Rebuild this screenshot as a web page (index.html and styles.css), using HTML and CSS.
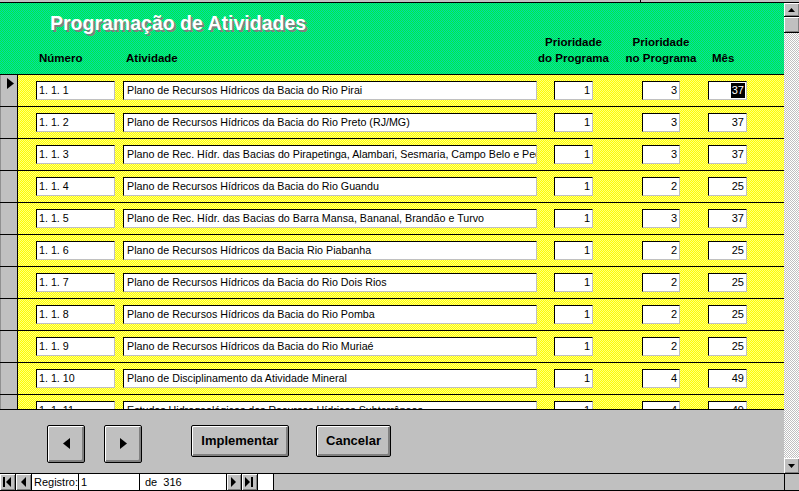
FILE: index.html
```html
<!DOCTYPE html>
<html lang="pt">
<head>
<meta charset="utf-8">
<title>Programação de Atividades</title>
<link rel="stylesheet" href="styles.css">
</head>
<body>
<div class="topbar"><div class="topbar-l"></div></div>
<div class="main">
  <div class="form">
    <div class="header">
      <div class="title">Programação de Atividades</div>
      <div class="cols labels">
        <div class="lbl l-num">Número</div>
        <div class="lbl l-atv">Atividade</div>
        <div class="lbl l-p1">Prioridade<br>do Programa</div>
        <div class="lbl l-p2">Prioridade<br>no Programa</div>
        <div class="lbl l-mes">Mês</div>
      </div>
    </div>
    <div class="detail">
      <div class="cols row">
        <div class="sel"><svg class="cur" width="7" height="11" viewBox="0 0 7 11"><polygon points="0,0 7,5.5 0,11" fill="#000"/></svg></div>
        <div class="fld c-num">1. 1. 1</div>
        <div class="fld c-atv">Plano de Recursos Hídricos da Bacia do Rio Pirai</div>
        <div class="fld r c-p1">1</div>
        <div class="fld r c-p2">3</div>
        <div class="fld r c-mes"><span class="hl">37</span></div>
      </div>
      <div class="cols row">
        <div class="sel"></div>
        <div class="fld c-num">1. 1. 2</div>
        <div class="fld c-atv">Plano de Recursos Hídricos da Bacia do Rio Preto (RJ/MG)</div>
        <div class="fld r c-p1">1</div>
        <div class="fld r c-p2">3</div>
        <div class="fld r c-mes">37</div>
      </div>
      <div class="cols row">
        <div class="sel"></div>
        <div class="fld c-num">1. 1. 3</div>
        <div class="fld c-atv">Plano de Rec. Hídr. das Bacias do Pirapetinga, Alambari, Sesmaria, Campo Belo e Pec</div>
        <div class="fld r c-p1">1</div>
        <div class="fld r c-p2">3</div>
        <div class="fld r c-mes">37</div>
      </div>
      <div class="cols row">
        <div class="sel"></div>
        <div class="fld c-num">1. 1. 4</div>
        <div class="fld c-atv">Plano de Recursos Hídricos da Bacia do Rio Guandu</div>
        <div class="fld r c-p1">1</div>
        <div class="fld r c-p2">2</div>
        <div class="fld r c-mes">25</div>
      </div>
      <div class="cols row">
        <div class="sel"></div>
        <div class="fld c-num">1. 1. 5</div>
        <div class="fld c-atv">Plano de Rec. Hídr. das Bacias do Barra Mansa, Bananal, Brandão e Turvo</div>
        <div class="fld r c-p1">1</div>
        <div class="fld r c-p2">3</div>
        <div class="fld r c-mes">37</div>
      </div>
      <div class="cols row">
        <div class="sel"></div>
        <div class="fld c-num">1. 1. 6</div>
        <div class="fld c-atv">Plano de Recursos Hídricos da Bacia Rio Piabanha</div>
        <div class="fld r c-p1">1</div>
        <div class="fld r c-p2">2</div>
        <div class="fld r c-mes">25</div>
      </div>
      <div class="cols row">
        <div class="sel"></div>
        <div class="fld c-num">1. 1. 7</div>
        <div class="fld c-atv">Plano de Recursos Hídricos da Bacia do Rio Dois Rios</div>
        <div class="fld r c-p1">1</div>
        <div class="fld r c-p2">2</div>
        <div class="fld r c-mes">25</div>
      </div>
      <div class="cols row">
        <div class="sel"></div>
        <div class="fld c-num">1. 1. 8</div>
        <div class="fld c-atv">Plano de Recursos Hídricos da Bacia do Rio Pomba</div>
        <div class="fld r c-p1">1</div>
        <div class="fld r c-p2">2</div>
        <div class="fld r c-mes">25</div>
      </div>
      <div class="cols row">
        <div class="sel"></div>
        <div class="fld c-num">1. 1. 9</div>
        <div class="fld c-atv">Plano de Recursos Hídricos da Bacia do Rio Muriaé</div>
        <div class="fld r c-p1">1</div>
        <div class="fld r c-p2">2</div>
        <div class="fld r c-mes">25</div>
      </div>
      <div class="cols row">
        <div class="sel"></div>
        <div class="fld c-num">1. 1. 10</div>
        <div class="fld c-atv">Plano de Disciplinamento da Atividade Mineral</div>
        <div class="fld r c-p1">1</div>
        <div class="fld r c-p2">4</div>
        <div class="fld r c-mes">49</div>
      </div>
      <div class="cols row">
        <div class="sel"></div>
        <div class="fld c-num">1. 1. 11</div>
        <div class="fld c-atv">Estudos Hidrogeológicos dos Recursos Hídricos Subterrâneos</div>
        <div class="fld r c-p1">1</div>
        <div class="fld r c-p2">4</div>
        <div class="fld r c-mes">49</div>
      </div>
    </div>
    <div class="footer">
      <div class="btn btn-arrow"><svg width="7" height="11" viewBox="0 0 7 11"><polygon points="7,0 0,5.5 7,11" fill="#000"/></svg></div>
      <div class="btn btn-arrow btn-next"><svg width="7" height="11" viewBox="0 0 7 11"><polygon points="0,0 7,5.5 0,11" fill="#000"/></svg></div>
      <div class="btn btn-impl">Implementar</div>
      <div class="btn btn-canc">Cancelar</div>
    </div>
  </div>
  <div class="vscroll">
    <div class="sb-btn sb-up"><svg width="7" height="4" viewBox="0 0 7 4"><polygon points="3.5,0 7,4 0,4" fill="#000"/></svg></div>
    <div class="sb-thumb"></div>
    <div class="sb-track"></div>
    <div class="sb-btn sb-down"><svg width="7" height="4" viewBox="0 0 7 4"><polygon points="0,0 7,0 3.5,4" fill="#000"/></svg></div>
  </div>
</div>
<div class="nav">
  <div class="nb"><svg width="15" height="16" viewBox="0 0 15 16"><rect x="3" y="3" width="2" height="10" fill="#000"/><polygon points="11,3 6,8 11,13" fill="#000"/></svg></div>
  <div class="nb"><svg width="15" height="16" viewBox="0 0 15 16"><polygon points="10,3 5,8 10,13" fill="#000"/></svg></div>
  <div class="nt nt-lbl">Registro:</div>
  <div class="nt nt-fld">1</div>
  <div class="nt nt-of">de  316</div>
  <div class="nb nb-n"><svg width="14" height="16" viewBox="0 0 14 16"><polygon points="4,3 9,8 4,13" fill="#000"/></svg></div>
  <div class="nb"><svg width="15" height="16" viewBox="0 0 15 16"><polygon points="3,3 8,8 3,13" fill="#000"/><rect x="9" y="3" width="2" height="10" fill="#000"/></svg></div>
  <div class="nt nt-new"></div>
  <div class="nav-rest"></div>
  <div class="nav-corner"></div>
</div>
</body>
</html>
```

FILE: styles.css
```css
html, body {
  margin: 0;
  padding: 0;
}
body {
  width: 799px;
  height: 491px;
  overflow: hidden;
  background: #c0c0c0;
  font-family: "Liberation Sans", Arial, sans-serif;
  color: #000;
}

.topbar {
  height: 2px;
  border-bottom: 1px solid #000;
  display: flex;
}
.topbar-l {
  width: 640px;
  border-right: 1px solid #000;
}

.main {
  display: flex;
  height: 470px;
}
.form {
  width: 784px;
  display: flex;
  flex-direction: column;
}

/* header */
.header {
  height: 71px;
  box-sizing: border-box;
  padding-top: 9px;
  background-image: repeating-conic-gradient(#00f040 0 25%, #00d8b0 0 50%);
  background-size: 2px 2px;
}
.title {
  padding-left: 50px;
  font-size: 19.5px;
  line-height: 22px;
  font-weight: bold;
  color: #fff;
  text-shadow: 2px 2px 0 #808080;
}

.cols {
  display: grid;
  grid-template-columns: 18px 18px 79px 8px 414px 17px 39px 49px 38px 28px 39px 1fr;
}

.labels {
  grid-template-rows: 32px;
  font-size: 11.5px;
  font-weight: bold;
  line-height: 16px;
}
.lbl {
  align-self: end;
  white-space: nowrap;
}
.l-num { grid-column: 3; padding-left: 3px; }
.l-atv { grid-column: 5; padding-left: 3px; }
.l-p1 { grid-column: 7; margin: 0 -30px; text-align: center; }
.l-p2 { grid-column: 9; margin: 0 -30px; text-align: center; }
.l-mes { grid-column: 11; padding-left: 4px; }

/* detail */
.detail {
  height: 335px;
  overflow: hidden;
  background-image: repeating-conic-gradient(#ffff00 0 25%, #ffff80 0 50%);
  background-size: 2px 2px;
}
.row {
  grid-template-rows: 31px;
  border-top: 1px solid #000;
  align-items: center;
}
.sel {
  grid-column: 1;
  align-self: stretch;
  background: #c0c0c0;
  border-right: 1px solid #000;
  box-shadow: inset 1px 0 #909090;
}
.cur {
  display: block;
  margin: 3px 0 0 7px;
}
.fld {
  box-sizing: border-box;
  height: 19px;
  border: 1px solid;
  border-color: #000 #c0c0c0 #c0c0c0 #000;
  background: #fff;
  font-size: 10.7px;
  line-height: 17px;
  padding: 0 2px;
  white-space: nowrap;
  overflow: hidden;
}
.fld.r {
  text-align: right;
  font-size: 11px;
}
.c-num { grid-column: 3; }
.c-atv { grid-column: 5; padding-left: 3px; }
.c-p1 { grid-column: 7; }
.c-p2 { grid-column: 9; }
.c-mes { grid-column: 11; }
.hl {
  display: inline-block;
  background: #000;
  color: #fff;
  line-height: 15px;
  padding: 0 1px;
  vertical-align: top;
  margin-top: 1px;
  margin-right: -1px;
}

/* footer */
.footer {
  flex: 1;
  border-top: 1px solid #000;
  background: #c0c0c0;
  display: flex;
  align-items: flex-start;
  padding: 15px 0 0 47px;
}
.btn {
  box-sizing: border-box;
  border: 1px solid #000;
  border-radius: 2px;
  background: #c0c0c0;
  box-shadow: inset 1px 1px #fff, inset -2px -2px #808080;
  font-size: 13px;
  font-weight: bold;
  display: flex;
  align-items: center;
  justify-content: center;
  padding-bottom: 1px;
}
.btn-arrow {
  width: 38px;
  height: 38px;
}
.btn-next {
  margin-left: 19px;
}
.btn-impl {
  margin-left: 49px;
  width: 98px;
  height: 32px;
}
.btn-canc {
  margin-left: 27px;
  width: 75px;
  height: 32px;
}

/* vertical scrollbar */
.vscroll {
  width: 15px;
  display: flex;
  flex-direction: column;
  background-image: repeating-conic-gradient(#c0c0c0 0 25%, #ffffff 0 50%);
  background-size: 2px 2px;
}
.sb-btn {
  background: #c0c0c0;
  box-shadow: inset 1px 1px #fff, inset -1px -1px #808080;
  display: flex;
  align-items: center;
  justify-content: center;
}
.sb-up {
  height: 13px;
  border-bottom: 1px solid #000;
}
.sb-thumb {
  height: 15px;
  background: #c0c0c0;
  box-shadow: inset 1px 1px #fff, inset -1px -1px #808080;
  border-bottom: 1px solid #000;
}
.sb-track {
  flex: 1;
}
.sb-down {
  height: 15px;
}

/* navigation bar */
.nav {
  height: 18px;
  box-sizing: border-box;
  border-top: 1px solid #000;
  border-bottom: 1px solid #000;
  display: flex;
  background: #c0c0c0;
  font-size: 11px;
  line-height: 16px;
}
.nb {
  width: 16px;
  box-sizing: border-box;
  border-right: 1px solid #000;
  background: #c0c0c0;
  box-shadow: inset 1px 1px #fff, inset -1px -1px #808080;
}
.nb svg {
  display: block;
}
.nb-n {
  width: 15px;
}
.nt {
  box-sizing: border-box;
  background: #fff;
  border-right: 1px solid #000;
  white-space: pre;
}
.nt-lbl {
  width: 47px;
  padding-left: 2px;
}
.nt-fld {
  width: 61px;
  padding-left: 2px;
}
.nt-of {
  width: 87px;
  padding-left: 5px;
}
.nt-new {
  width: 16px;
}
.nav-rest {
  width: 510px;
  border-right: 1px solid #000;
}
.nav-corner {
  flex: 1;
}
```
